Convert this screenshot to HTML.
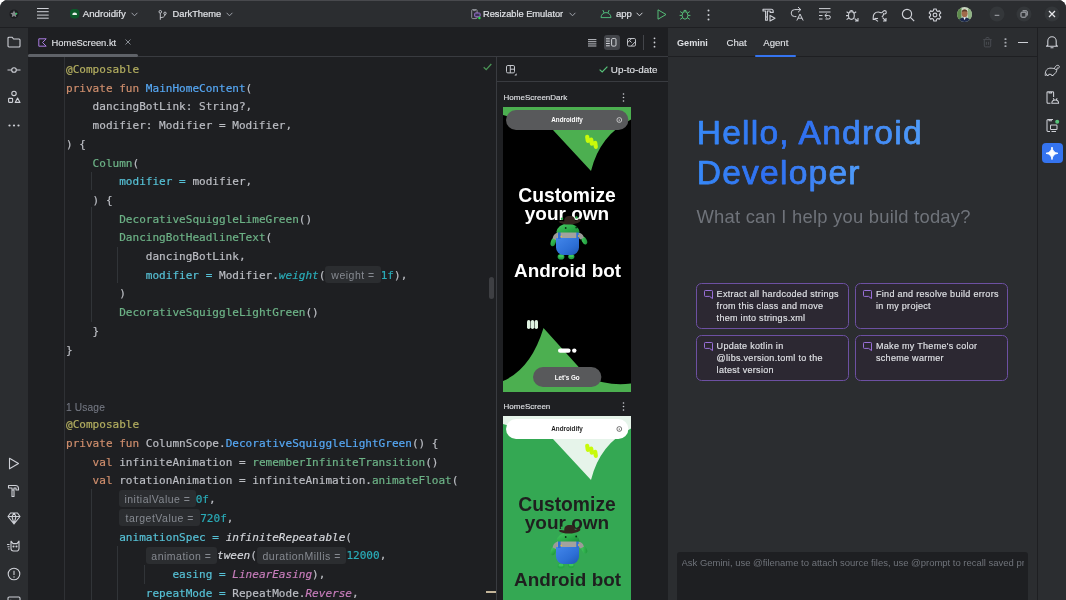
<!DOCTYPE html>
<html lang="en">
<head>
<meta charset="utf-8">
<title>Android Studio – HomeScreen.kt</title>
<style>
*{box-sizing:border-box;margin:0;padding:0}
html,body{width:1066px;height:600px;overflow:hidden;background:#fff}
body{font-family:"Liberation Sans","DejaVu Sans",sans-serif;color:#dfe1e5;font-size:10.5px;-webkit-font-smoothing:antialiased}
#win{will-change:transform;position:absolute;left:0;top:0;width:1066px;height:600px;background:#2b2d30;border-radius:8px 8px 0 0;overflow:hidden}
.abs{position:absolute}
svg{position:absolute;overflow:visible}
/* title bar */
#title{position:absolute;left:0;top:0;width:1066px;height:27px;background:#2b2d30;border-top:1px solid #48494d}
.ui{-webkit-text-stroke:.12px}
#title .t{-webkit-text-stroke:.2px;position:absolute;top:6.300px;line-height:14px;font-size:9.5px;color:#dfe1e5;white-space:nowrap}
/* stripes */
#lstripe{position:absolute;left:0;top:27px;width:28px;height:573px;background:#2b2d30;border-top:1px solid #1e1f22}
#rstripe{position:absolute;left:1037.400px;top:27px;width:28.600px;height:573px;background:#2b2d30;border-top:1px solid #1e1f22;border-left:1px solid #1e1f22}
/* editor */
#editor{position:absolute;left:28px;top:28px;width:640px;height:572px;background:#1e1f22}
#tabs{position:absolute;left:0;top:0;width:640px;height:29px;border-bottom:1px solid #393b40}
#code{position:absolute;left:0;top:29px;width:468px;height:543px;overflow:hidden}
.ln{position:absolute;left:38px;top:calc(4px + var(--i) * 18.7px);height:18.7px;line-height:18.7px;white-space:pre;font-family:"DejaVu Sans Mono","Liberation Mono",monospace;font-size:11.05px;color:#bcbec4;letter-spacing:0;-webkit-text-stroke:.18px}
.k{color:#cf8e6d}.fd{color:#56a8f5}.an{color:#b3ae60}.g{color:#6db387}.na{color:#56c1d6}.nu{color:#2aacb8}.it{font-style:italic}.ti{color:#2aacb8;font-style:italic}.pi{color:#c77dbb;font-style:italic}.wi{color:#d5d7dc;font-style:italic}
.h{display:inline-block;vertical-align:top;height:17px;margin-top:-.7px;line-height:18.300px;background:#2b2d30;color:#868a91;border-radius:3px;font-family:"Liberation Sans",sans-serif;font-size:10.500px;letter-spacing:.5px;text-align:center;font-style:normal;-webkit-text-stroke:0}
.guide{position:absolute;width:1px;background:#313438}
/* preview */
#preview{position:absolute;left:468px;top:29px;width:172px;height:543px;border-left:1px solid #393b40;overflow:hidden}
/* gemini */
#gem{position:absolute;left:668px;top:28px;width:370px;height:572px;background:#2b2d30}
#gemi{position:absolute;left:1px;top:0;width:369px;height:572px}

.hello{font-size:35.800px;line-height:41.500px;white-space:nowrap;color:#3b82f6;background:linear-gradient(90deg,#2f7df6 0%,#4a8cf7 60%,#5a96f8 100%);-webkit-background-clip:text;background-clip:text;-webkit-text-fill-color:transparent;width:230px}
.card{position:absolute;width:152.500px;height:45.500px;border:1.200px solid #6d50a2;border-radius:5.500px;background:#2c2832}
.card .ct{-webkit-text-stroke:.15px;position:absolute;left:19.600px;top:5px;font-size:9px;letter-spacing:.3px;line-height:11.800px;color:#dfe1e5;white-space:nowrap}
</style>
</head>
<body>
<div id="win">
<div id="title">
<!-- app icon -->
<svg style="left:8.700px;top:7.800px" width="10" height="10" viewBox="0 0 10 10"><circle cx="5" cy="5" r="4.600" fill="#1b1c1f"/><path d="M5.00 1.30 L6.12 3.66 L8.71 3.99 L6.81 5.79 L7.29 8.36 L5.00 7.10 L2.71 8.36 L3.19 5.79 L1.29 3.99 L3.88 3.66z" fill="#85878c"/><circle cx="7.300" cy="4.800" r=".95" fill="#2fbf5f"/></svg>
<!-- hamburger -->
<svg style="left:37px;top:6.300px" width="12" height="12" viewBox="0 0 12 12" stroke="#ced0d6" stroke-width="1"><path d="M0 1.500H11.700M0 4.700H11.700M0 8.100H11.700M0 11.200H11.700"/></svg>
<!-- project -->
<svg style="left:70.100px;top:7.900px" width="9.400" height="9.400" viewBox="0 0 9.400 9.400"><rect x="0" y="0" width="9.400" height="9.400" rx="3.600" fill="#0c5a2a"/><path d="M2.300 6a2.400 2.400 0 0 1 4.800 0z" fill="#e8efe9"/></svg>
<div class="t" style="left:82.7px;font-size:9.7px">Androidify</div>
<svg style="left:131px;top:11px" width="7" height="5" viewBox="0 0 7 5" fill="none" stroke="#9da0a8" stroke-width="1"><path d="M.6 .8 3.5 3.8 6.4 .8"/></svg>
<!-- branch -->
<svg style="left:158px;top:8.500px" width="9" height="10" viewBox="0 0 9 10" fill="none" stroke="#ced0d6" stroke-width=".9"><circle cx="2.300" cy="1.800" r="1.300"/><circle cx="7" cy="3.300" r="1.200"/><path d="M2.300 3.100V9.800M2.300 7.600C4.500 7.600 7 7 7 4.500"/></svg>
<div class="t" style="left:172.5px;font-size:9.3px">DarkTheme</div>
<svg style="left:225.5px;top:11px" width="7" height="5" viewBox="0 0 7 5" fill="none" stroke="#9da0a8" stroke-width="1"><path d="M.6 .8 3.5 3.8 6.4 .8"/></svg>
<!-- device selector -->
<svg style="left:470.800px;top:8.400px" width="10.500" height="10.500" viewBox="0 0 10.500 10.500" fill="none" stroke="#9a9da3" stroke-width=".9"><rect x=".7" y=".6" width="5.400" height="9" rx="1"/><path d="M2.400 .6V1.600H4.400V.6"/><rect x="3.700" y="4" width="5.400" height="3.800" rx=".8" stroke="#a77be0" fill="#3a3350"/><circle cx="8.400" cy="9" r="1.200" fill="#2be04a" stroke="none"/></svg>
<div class="t" style="left:483px;font-size:9.25px">Resizable Emulator</div>
<svg style="left:568.5px;top:11px" width="7" height="5" viewBox="0 0 7 5" fill="none" stroke="#9da0a8" stroke-width="1"><path d="M.6 .8 3.5 3.8 6.4 .8"/></svg>
<!-- run config -->
<svg style="left:600px;top:8px" width="12" height="11" viewBox="0 0 12 11" fill="none" stroke="#4fb87a" stroke-width="1"><path d="M1 8.6a5 5 0 0 1 10 0zM2.8 1 4.2 4M9.2 1 7.8 4"/></svg>
<div class="t" style="left:616px">app</div>
<svg style="left:635.5px;top:11px" width="7" height="5" viewBox="0 0 7 5" fill="none" stroke="#ced0d6" stroke-width="1"><path d="M.6 .8 3.5 3.8 6.4 .8"/></svg>
<svg style="left:656.5px;top:8px" width="10" height="11" viewBox="0 0 10 11" fill="none" stroke="#57c47a" stroke-width=".95" stroke-linejoin="round"><path d="M1 .8 9 5.5 1 10.2z"/></svg>
<svg style="left:679px;top:7px" width="12" height="13" viewBox="0 0 12 13" fill="none" stroke="#57c47a" stroke-width=".95"><ellipse cx="6" cy="7.4" rx="2.9" ry="3.8"/><path d="M4.2 3.6a1.9 1.9 0 0 1 3.6 0M0.6 7.4H3M9 7.4h2.4M1.2 3.6 3.4 5M10.8 3.6 8.6 5M1.2 11.4l2.2-1.6M10.8 11.4 8.6 9.8"/></svg>
<svg style="left:707px;top:8px" width="3" height="12" viewBox="0 0 3 12" fill="#ced0d6"><circle cx="1.5" cy="1.6" r="1"/><circle cx="1.5" cy="6" r="1"/><circle cx="1.5" cy="10.4" r="1"/></svg>
<!-- right toolbar icons -->
<svg style="left:762px;top:7px" width="14" height="14" viewBox="0 0 14 14" fill="none" stroke="#ced0d6" stroke-width="1.1" stroke-linejoin="round"><path d="M1 1.2H9.2a2 2 0 0 1 2 2V4.4H8.2V3H5.4V9H3.6V3H1zM3.6 9.6v2.6h1.8V9.6M8 7.4 13 10.2 8 13z"/></svg>
<svg style="left:790px;top:6px" width="14" height="14" viewBox="0 0 14 14" fill="none" stroke="#ced0d6" stroke-width="1" stroke-linejoin="round" stroke-linecap="round"><path d="M10.600 2.600H4.700A3.500 3.500 0 0 0 4.700 9.600H6M8.300 .3 10.800 2.600 8.300 5M7 13.200 10 7 13 13.200M8.200 11.200H11.800"/></svg>
<svg style="left:817px;top:6px" width="14" height="14" viewBox="0 0 14 14" fill="none" stroke="#ced0d6" stroke-width="1"><path d="M2 1.600H13.500M2 5H13.500M2 8.500H5.500M2 12H5.500M8 8.500H11.600a1.750 1.750 0 0 1 0 3.500H8.500M9.900 6.500 7.800 8.500 9.900 10.500"/></svg>
<svg style="left:845px;top:7px" width="14" height="14" viewBox="0 0 14 14" fill="none" stroke="#ced0d6" stroke-width="1.1"><ellipse cx="6.4" cy="7.6" rx="2.9" ry="3.8"/><path d="M4.6 3.8a1.9 1.9 0 0 1 3.6 0M1 7.6H3.4M1.6 3.8 3.8 5.2M11.2 3.8 9 5.2M1.6 11.6l2.2-1.6M9.6 10.6 13 13M13 10v3H10"/></svg>
<svg style="left:872px;top:7px" width="16" height="14" viewBox="0 0 16 14" fill="none" stroke="#ced0d6" stroke-width="1.1" stroke-linejoin="round"><path d="M1.2 9.4c0-3 1.6-5.4 5-5.4 1.6 0 2.2.8 3.4.8 1 0 1.4-2.2 3-2.2a1.7 1.7 0 0 1 0 3.4c-.7 0-1-.4-1-.4 0 1.800-.6 2.800-1.800 3.400M1.200 9.400v2h1.800v-1.200c1 .4 2 .4 3 0M10.600 9.600 14 13M14 10v3h-3M3.600 11.600 6 13.400"/></svg>
<svg style="left:901px;top:7px" width="14" height="14" viewBox="0 0 14 14" fill="none" stroke="#ced0d6" stroke-width="1.2"><circle cx="6" cy="6" r="4.6"/><path d="M9.400 9.400 13.200 13.200"/></svg>
<svg style="left:928px;top:7px" width="14" height="14" viewBox="0 0 14 14" fill="none" stroke="#ced0d6" stroke-width="1.1" stroke-linejoin="round"><circle cx="7" cy="7" r="1.900"/><path d="M5.800 1h2.400l.4 1.700 1.300.7 1.700-.5 1.200 2.100-1.300 1.200v1.600l1.300 1.200-1.200 2.100-1.700-.5-1.300.7-.4 1.700H5.800l-.4-1.700-1.300-.7-1.700.5-1.200-2.100 1.300-1.200V6.200L1.200 5l1.200-2.100 1.700.5 1.300-.7z"/></svg>
<!-- avatar -->
<svg style="left:956.600px;top:6.200px" width="15" height="15" viewBox="0 0 15 15"><defs><clipPath id="av"><circle cx="7.500" cy="7.500" r="7.400"/></clipPath></defs><g clip-path="url(#av)"><rect width="15" height="15" fill="#c9d6c2"/><rect x="0" y="0" width="4.500" height="15" fill="#5d8a4c"/><rect x="11" y="0" width="4" height="15" fill="#8fb383"/><ellipse cx="7.600" cy="6.300" rx="3" ry="3.900" fill="#a06a4a"/><path d="M4.700 4.800a3 3 0 0 1 5.800 0c-1.800-.9-4-.9-5.800 0z" fill="#5a3a2a"/><path d="M1.500 15c0-3 2.200-4.600 6-4.600s6 1.600 6 4.600z" fill="#1e2a4d"/><path d="M6.300 10.300 7.600 13.200 8.900 10.300z" fill="#f0f0f5"/></g></svg>
<!-- window buttons -->
<svg style="left:989px;top:5px" width="16" height="16" viewBox="0 0 16 16"><circle cx="8" cy="8" r="7.500" fill="#34373a"/><path d="M5.700 9.300h4.600" stroke="#a8abb1" stroke-width="1"/></svg>
<svg style="left:1016px;top:5px" width="16" height="16" viewBox="0 0 16 16"><circle cx="8" cy="8" r="7.500" fill="#34373a"/><rect x="5" y="6.200" width="5" height="5" rx=".8" fill="none" stroke="#b4b7bd" stroke-width="1"/><path d="M6.600 4.800H10.400a.8.800 0 0 1 .8.800V9.600" fill="none" stroke="#b4b7bd" stroke-width="1"/></svg>
<svg style="left:1044px;top:5px" width="16" height="16" viewBox="0 0 16 16"><circle cx="8" cy="8" r="7.500" fill="#34373a"/><path d="M5 5l6 6M11 5l-6 6" stroke="#e6e7ea" stroke-width="1.250"/></svg>
</div>
<div class="abs" style="left:0;top:27px;width:1066px;height:1px;background:#1e1f22"></div>
<div id="lstripe">
<svg style="left:7px;top:7px" width="14" height="14" viewBox="0 0 14 14" fill="none" stroke="#ced0d6" stroke-width="1.1" stroke-linejoin="round"><path d="M1 3.200a1 1 0 0 1 1-1h3l1.600 1.800H12a1 1 0 0 1 1 1V11a1 1 0 0 1-1 1H2a1 1 0 0 1-1-1z"/></svg>
<svg style="left:7px;top:36px" width="14" height="12" viewBox="0 0 14 12" fill="none" stroke="#ced0d6" stroke-width="1.1"><circle cx="7" cy="6" r="2.300"/><path d="M.5 6H4.700M9.300 6H13.500"/></svg>
<svg style="left:7px;top:62px" width="14" height="14" viewBox="0 0 14 14" fill="none" stroke="#ced0d6" stroke-width="1.1" stroke-linejoin="round"><circle cx="7" cy="3.400" r="2.200"/><rect x="1.600" y="8.400" width="4" height="4" rx=".6"/><path d="M10.600 8 13 12.400H8.200z"/></svg>
<svg style="left:8px;top:96px" width="12" height="3" viewBox="0 0 12 3" fill="#ced0d6"><circle cx="1.500" cy="1.500" r="1.100"/><circle cx="6" cy="1.500" r="1.100"/><circle cx="10.500" cy="1.500" r="1.100"/></svg>
<svg style="left:8px;top:429px" width="12" height="13" viewBox="0 0 12 13" fill="none" stroke="#ced0d6" stroke-width="1.1" stroke-linejoin="round"><path d="M1.500 1.200 10.500 6.500 1.500 11.800z"/></svg>
<svg style="left:7px;top:456px" width="14" height="14" viewBox="0 0 14 14" fill="none" stroke="#ced0d6" stroke-width="1.1" stroke-linejoin="round"><path d="M1.500 1.500H8.500a3 3 0 0 1 3 3V6H9V4H7V6H5V4H1.500zM5 6.500V12.500H7V6.500"/></svg>
<svg style="left:7px;top:484px" width="14" height="13" viewBox="0 0 14 13" fill="none" stroke="#ced0d6" stroke-width="1.1" stroke-linejoin="round"><path d="M3.500 1H10.500L13 4.500 7 12 1 4.500zM1 4.500H13M5 4.500 7 12 9 4.500M5 4.500 7 1 9 4.500"/></svg>
<svg style="left:6px;top:512px" width="15" height="13" viewBox="0 0 15 13" fill="none" stroke="#ced0d6" stroke-width="1.1" stroke-linejoin="round"><path d="M5 1.200 7 3.600H11L13 1.200V8.500a2.500 2.500 0 0 1-2.500 2.500h-3A2.500 2.500 0 0 1 5 8.500zM1 4.500H3.500M1.500 6.800H3.500M2 9H3.500"/><circle cx="7.500" cy="6.500" r=".5" fill="#ced0d6"/><circle cx="10.500" cy="6.500" r=".5" fill="#ced0d6"/></svg>
<svg style="left:7px;top:539px" width="14" height="14" viewBox="0 0 14 14" fill="none" stroke="#ced0d6" stroke-width="1.1"><circle cx="7" cy="7" r="5.800"/><path d="M7 3.800V8"/><circle cx="7" cy="10" r=".7" fill="#ced0d6" stroke="none"/></svg>
<svg style="left:7px;top:568px" width="14" height="12" viewBox="0 0 14 12" fill="none" stroke="#ced0d6" stroke-width="1.1" stroke-linejoin="round"><rect x="1" y="1" width="12" height="10" rx="1.200"/><path d="M3.500 4 6 6.200 3.500 8.400"/></svg>
</div>
<div id="editor">
  <div id="tabs">
<svg style="left:10px;top:10px" width="9" height="9" viewBox="0 0 9 9" fill="none" stroke="#a87be0" stroke-width="1" stroke-linejoin="round"><path d="M.8 .8H8.200L4.500 4.500 8.200 8.200H.8z"/></svg>
<div class="abs ui" style="left:23.600px;top:7.600px;line-height:14px;font-size:9.4px;color:#dfe1e5;white-space:nowrap">HomeScreen.kt</div>
<svg style="left:96.600px;top:11.400px" width="6" height="6" viewBox="0 0 6 6" stroke="#868a91" stroke-width="1"><path d="M.5 .5l5 5M5.500 .5l-5 5"/></svg>
<div class="abs" style="left:0;top:26px;width:109.500px;height:3px;background:#5f6268;border-radius:1.500px"></div>
<!-- view mode icons -->
<svg style="left:560px;top:10.600px" width="8.400" height="7.600" viewBox="0 0 8.400 7.600" stroke="#ced0d6" stroke-width=".9"><path d="M0 .6H8.400M0 2.700H8.400M0 4.900H8.400M0 7H8.400"/></svg>
<div class="abs" style="left:575.600px;top:7px;width:16.400px;height:14.700px;border-radius:3px;background:#43454a"></div>
<svg style="left:578.300px;top:10.200px" width="10.600" height="8.600" viewBox="0 0 10.600 8.600" fill="none" stroke="#dfe1e5" stroke-width=".9"><path d="M0 .8H3.800M0 3.100H3.800M0 5.500H3.800M0 7.800H3.800"/><rect x="5.600" y=".5" width="4.400" height="7.600" rx="1.200"/></svg>
<svg style="left:598.600px;top:10.200px" width="9" height="8.600" viewBox="0 0 9 8.600" fill="none" stroke="#ced0d6" stroke-width=".9" stroke-linejoin="round"><rect x=".5" y=".5" width="8" height="7.600" rx="1.200"/><path d="M.5 4.800 4.600 .5M4.200 8.100 8.500 3.600M2.600 2.600l2 2"/></svg>
<div class="abs" style="left:614.500px;top:7px;width:1px;height:15px;background:#43454a"></div>
<svg style="left:624.500px;top:9px" width="3" height="11" viewBox="0 0 3 11" fill="#ced0d6"><circle cx="1.500" cy="1.300" r=".9"/><circle cx="1.500" cy="5.500" r=".9"/><circle cx="1.500" cy="9.700" r=".9"/></svg>
</div>
  <div id="code">
<div class="guide" style="left:36px;top:0;height:543px;background:#2f3135"></div>
<div class="guide" style="left:63px;top:114.700px;height:18.700px"></div>
<div class="guide" style="left:63px;top:149.700px;height:115px"></div>
<div class="guide" style="left:89px;top:189.700px;height:36.600px"></div>
<div class="guide" style="left:63px;top:432.300px;height:111px"></div>
<div class="guide" style="left:89px;top:489px;height:54px"></div>
<div class="guide" style="left:115.500px;top:508.300px;height:18.700px"></div>
<svg style="left:454.500px;top:5.500px" width="9" height="8" viewBox="0 0 9 8" fill="none" stroke="#4a9455" stroke-width="1.300"><path d="M.7 4.200 3.200 6.600 8.300 1"/></svg>
<div class="abs" style="left:460.800px;top:219.700px;width:5.400px;height:22.500px;border-radius:2.700px;background:#3e3f43"></div>
<div class="abs" style="left:458px;top:534px;width:10px;height:2px;background:#c3b499"></div>
<div class="ln" style="--i:0"><span class="an">@Composable</span></div>
<div class="ln" style="--i:1"><span class="k">private fun</span> <span class="fd">MainHomeContent</span>(</div>
<div class="ln" style="--i:2">    dancingBotLink: String?,</div>
<div class="ln" style="--i:3">    modifier: Modifier = Modifier,</div>
<div class="ln" style="--i:4">) {</div>
<div class="ln" style="--i:5">    <span class="g">Column</span>(</div>
<div class="ln" style="--i:6">        <span class="na">modifier =</span> modifier,</div>
<div class="ln" style="--i:7">    ) {</div>
<div class="ln" style="--i:8">        <span class="g">DecorativeSquiggleLimeGreen</span>()</div>
<div class="ln" style="--i:9">        <span class="g">DancingBotHeadlineText</span>(</div>
<div class="ln" style="--i:10">            dancingBotLink,</div>
<div class="ln" style="--i:11">            <span class="na">modifier =</span> Modifier.<span class="ti">weight</span>(<span class="h" style="width:55.300px">weight =</span><span class="nu">1f</span>),</div>
<div class="ln" style="--i:12">        )</div>
<div class="ln" style="--i:13">        <span class="g">DecorativeSquiggleLightGreen</span>()</div>
<div class="ln" style="--i:14">    }</div>
<div class="ln" style="--i:15">}</div>
<div class="ln" style="--i:18;font-family:'Liberation Sans',sans-serif;font-size:10.200px;letter-spacing:.15px;color:#747883;-webkit-text-stroke:.1px;transform:translateY(.5px)">1 Usage</div>
<div class="ln" style="--i:19"><span class="an">@Composable</span></div>
<div class="ln" style="--i:20"><span class="k">private fun</span> ColumnScope.<span class="fd">DecorativeSquiggleLightGreen</span>() {</div>
<div class="ln" style="--i:21">    <span class="k">val</span> infiniteAnimation = <span class="g">rememberInfiniteTransition</span>()</div>
<div class="ln" style="--i:22">    <span class="k">val</span> rotationAnimation = infiniteAnimation.<span class="g">animateFloat</span>(</div>
<div class="ln" style="--i:23">        <span class="h" style="width:76.500px">initialValue =</span><span class="nu">0f</span>,</div>
<div class="ln" style="--i:24">        <span class="h" style="width:81px">targetValue =</span><span class="nu">720f</span>,</div>
<div class="ln" style="--i:25">        <span class="na">animationSpec =</span> <span class="wi">infiniteRepeatable</span>(</div>
<div class="ln" style="--i:26">            <span class="h" style="width:71.200px">animation =</span><span class="wi">tween</span>(<span class="h" style="width:89.500px">durationMillis =</span><span class="nu">12000</span>,</div>
<div class="ln" style="--i:27">                <span class="na">easing =</span> <span class="pi">LinearEasing</span>),</div>
<div class="ln" style="--i:28">            <span class="na">repeatMode =</span> RepeatMode.<span class="pi">Reverse</span>,</div>
</div>
  <div id="preview"><div class="abs" style="left:2px;top:0;width:170px;height:543px">
<div class="abs" style="left:-2px;top:0;width:172px;height:25px;border-bottom:1px solid #393b40"></div>
<svg style="left:7px;top:8px" width="12" height="11" viewBox="0 0 12 11" fill="none" stroke="#ced0d6" stroke-width=".95" stroke-linejoin="round"><rect x=".5" y=".5" width="8" height="7.400" rx="1.300"/><path d="M4.300 .5V7.900M4.300 4.200H8.500"/><path d="M10.600 8.300v2.200H8.400z" fill="#ced0d6" stroke="none"/></svg>
<svg style="left:100px;top:9px" width="9" height="7" viewBox="0 0 9 7" fill="none" stroke="#57c47a" stroke-width="1.200"><path d="M.6 3.600 3.200 6 8.400 .6"/></svg>
<div class="abs ui" style="left:111.800px;top:5.500px;line-height:14px;font-size:9.900px;color:#dfe1e5;white-space:nowrap">Up-to-date</div>
<div class="abs ui" style="left:4.600px;top:33.700px;line-height:14px;font-size:8px;color:#dfe1e5;white-space:nowrap">HomeScreenDark</div>
<svg style="left:122.500px;top:35.500px" width="3" height="9" viewBox="0 0 3 9" fill="#ced0d6"><circle cx="1.500" cy="1" r=".8"/><circle cx="1.500" cy="4.500" r=".8"/><circle cx="1.500" cy="8" r=".8"/></svg>

<svg style="left:4.300px;top:50px" width="128" height="285" viewBox="0 0 128 285" font-family="Liberation Sans, sans-serif">
<rect width="128" height="285" fill="#000"/>
<path d="M0 0H128V12.600Q97 28 88 64L50 23 0 8z" fill="#4caf50"/>
<path d="M84.200 29.800l.6 4M88.200 32.600l.6 4M92.200 35.800l.6 4" fill="none" stroke="#c8fa0a" stroke-width="4.200" stroke-linecap="round"/>
<rect x="3" y="3" width="122.400" height="20" rx="10" fill="#58595b"/>
<text x="64" y="15" font-size="6.300" font-weight="700" text-anchor="middle" fill="#fff">Androidify</text>
<circle cx="116.300" cy="13" r="2.400" fill="none" stroke="#fff" stroke-width=".6"/><path d="M116.300 12.400v1.800" stroke="#fff" stroke-width=".6"/>
<text x="64" y="95" font-size="19.300" font-weight="700" text-anchor="middle" fill="#fff">Customize</text>
<text x="64" y="113" font-size="19" font-weight="700" text-anchor="middle" fill="#fff">your own</text>
<text x="64.500" y="170" font-size="18.900" font-weight="700" text-anchor="middle" fill="#fff">Android bot</text>
<!-- bot -->
<g>
<defs>
<linearGradient id="hda" x1="0" y1="0" x2="1" y2="1"><stop offset="0" stop-color="#4bcb66"/><stop offset=".5" stop-color="#2fb14c"/><stop offset="1" stop-color="#1c8f39"/></linearGradient>
<linearGradient id="bla" x1="0" y1="0" x2="1" y2="1"><stop offset="0" stop-color="#4286ea"/><stop offset=".6" stop-color="#2d6fd6"/><stop offset="1" stop-color="#1f56b3"/></linearGradient>
</defs>
<ellipse cx="58" cy="149.800" rx="3.400" ry="2.800" fill="#27a846"/><ellipse cx="68.300" cy="149.600" rx="3.100" ry="2.600" fill="#27a846"/><ellipse cx="58" cy="149" rx="2.600" ry="1.600" fill="#3cc45c"/><ellipse cx="68.300" cy="148.800" rx="2.400" ry="1.500" fill="#3cc45c"/>
<ellipse cx="50.300" cy="135" rx="2.500" ry="4.400" transform="rotate(18 50.300 135)" fill="url(#hda)"/>
<ellipse cx="81.300" cy="133.500" rx="2.400" ry="4.200" transform="rotate(-28 81.300 133.500)" fill="url(#hda)"/>
<path d="M49.700 131.500c.5-3.500 3-6 6-6h19c3.500 0 5.500 2.200 6.200 5.200l-3.700 1.800-2-2.500H55l-1.600 3.300z" fill="#9c9b98"/>
<rect x="54" y="125" width="21.500" height="8" fill="#a3a29f"/>
<path d="M53 131H76V140.500a7.500 7.500 0 0 1-7.500 7.500H60.500A7.500 7.500 0 0 1 53 140.500z" fill="url(#bla)"/>
<rect x="55" y="125" width="2.600" height="7" fill="#2d6fd6"/><rect x="73.300" y="125" width="2.400" height="7" fill="#2d6fd6"/>
<circle cx="58.300" cy="129.500" r=".8" fill="#e8c23a"/><circle cx="75.600" cy="129" r=".8" fill="#e8c23a"/>
<path d="M53.200 125.500a11.800 10 0 0 1 23.500 0z" fill="url(#hda)"/>
<circle cx="62.700" cy="121" r=".9" fill="#0e2b16"/><circle cx="73.200" cy="120.500" r=".9" fill="#0e2b16"/>
<circle cx="59" cy="111.800" r="1.200" fill="#2fb14c"/><circle cx="73.500" cy="110.500" r="1.200" fill="#2fb14c"/>
<path transform="translate(.3 1.600)" d="M55.300 113.200c3.500 3.600 16 4 21.500-.3.800-1.500-.1-2.900-1.500-3-.5 1.400-1.800 2.100-3.800 2.300.3-2.800-.6-4.900-5.300-4.900-4.400 0-5.400 2.600-5.200 5.600-2-.3-4.300-1-5.700.3z" fill="#33241e"/>
</g>

<path d="M0 274Q28 262 40.500 221L75.700 260Q87 273.500 100 275.200Q114 278.600 128 276.500V285H0z" fill="#4caf50"/>
<rect x="24" y="213" width="3.400" height="9" rx="1.700" fill="#dff2e1"/><rect x="27.800" y="213" width="3.400" height="9" rx="1.700" fill="#dff2e1"/><rect x="31.600" y="213" width="3.400" height="9" rx="1.700" fill="#dff2e1"/>
<rect x="55" y="241.400" width="12.600" height="4.400" rx="2.200" fill="#fff"/><circle cx="71.300" cy="243.600" r="2.200" fill="#fff"/>
<rect x="30" y="260" width="68.400" height="20" rx="10" fill="#58595b"/>
<text x="64.200" y="273" font-size="6.300" font-weight="700" text-anchor="middle" fill="#fff">Let's Go</text>

</svg>

<div class="abs ui" style="left:4.600px;top:342.900px;line-height:14px;font-size:8px;color:#dfe1e5;white-space:nowrap">HomeScreen</div>
<svg style="left:122.500px;top:344.500px" width="3" height="9" viewBox="0 0 3 9" fill="#ced0d6"><circle cx="1.500" cy="1" r=".8"/><circle cx="1.500" cy="4.500" r=".8"/><circle cx="1.500" cy="8" r=".8"/></svg>

<svg style="left:4.300px;top:359px" width="128" height="285" viewBox="0 0 128 285" font-family="Liberation Sans, sans-serif">
<rect width="128" height="285" fill="#34a853"/>
<path d="M0 0H128V12.600Q97 28 88 64L50 23 0 8z" fill="#e6f4ea"/>
<path d="M84.200 29.800l.6 4M88.200 32.600l.6 4M92.200 35.800l.6 4" fill="none" stroke="#c8fa0a" stroke-width="4.200" stroke-linecap="round"/>
<rect x="3" y="3" width="122.400" height="20" rx="10" fill="#fff"/>
<text x="64" y="15" font-size="6.300" font-weight="700" text-anchor="middle" fill="#1f1f1f">Androidify</text>
<circle cx="116.300" cy="13" r="2.400" fill="none" stroke="#1f1f1f" stroke-width=".6"/><path d="M116.300 12.400v1.800" stroke="#1f1f1f" stroke-width=".6"/>
<text x="64" y="95" font-size="19.300" font-weight="700" text-anchor="middle" fill="#1f1f1f">Customize</text>
<text x="64" y="113" font-size="19" font-weight="700" text-anchor="middle" fill="#1f1f1f">your own</text>
<text x="64.500" y="170" font-size="18.900" font-weight="700" text-anchor="middle" fill="#1f1f1f">Android bot</text>
<!-- bot -->
<g>
<defs>
<linearGradient id="hdb" x1="0" y1="0" x2="1" y2="1"><stop offset="0" stop-color="#4bcb66"/><stop offset=".5" stop-color="#2fb14c"/><stop offset="1" stop-color="#1c8f39"/></linearGradient>
<linearGradient id="blb" x1="0" y1="0" x2="1" y2="1"><stop offset="0" stop-color="#4286ea"/><stop offset=".6" stop-color="#2d6fd6"/><stop offset="1" stop-color="#1f56b3"/></linearGradient>
</defs>
<ellipse cx="58" cy="149.800" rx="3.400" ry="2.800" fill="#27a846"/><ellipse cx="68.300" cy="149.600" rx="3.100" ry="2.600" fill="#27a846"/><ellipse cx="58" cy="149" rx="2.600" ry="1.600" fill="#3cc45c"/><ellipse cx="68.300" cy="148.800" rx="2.400" ry="1.500" fill="#3cc45c"/>
<ellipse cx="50.300" cy="135" rx="2.500" ry="4.400" transform="rotate(18 50.300 135)" fill="url(#hdb)"/>
<ellipse cx="81.300" cy="133.500" rx="2.400" ry="4.200" transform="rotate(-28 81.300 133.500)" fill="url(#hdb)"/>
<path d="M49.700 131.500c.5-3.500 3-6 6-6h19c3.500 0 5.500 2.200 6.200 5.200l-3.700 1.800-2-2.500H55l-1.600 3.300z" fill="#9c9b98"/>
<rect x="54" y="125" width="21.500" height="8" fill="#a3a29f"/>
<path d="M53 131H76V140.500a7.500 7.500 0 0 1-7.500 7.500H60.500A7.500 7.500 0 0 1 53 140.500z" fill="url(#blb)"/>
<rect x="55" y="125" width="2.600" height="7" fill="#2d6fd6"/><rect x="73.300" y="125" width="2.400" height="7" fill="#2d6fd6"/>
<circle cx="58.300" cy="129.500" r=".8" fill="#e8c23a"/><circle cx="75.600" cy="129" r=".8" fill="#e8c23a"/>
<path d="M53.200 125.500a11.800 10 0 0 1 23.500 0z" fill="url(#hdb)"/>
<circle cx="62.700" cy="121" r=".9" fill="#0e2b16"/><circle cx="73.200" cy="120.500" r=".9" fill="#0e2b16"/>
<circle cx="59" cy="111.800" r="1.200" fill="#2fb14c"/><circle cx="73.500" cy="110.500" r="1.200" fill="#2fb14c"/>
<path transform="translate(.3 1.600)" d="M55.300 113.200c3.500 3.600 16 4 21.500-.3.800-1.500-.1-2.900-1.500-3-.5 1.400-1.800 2.100-3.800 2.300.3-2.800-.6-4.900-5.300-4.900-4.400 0-5.400 2.600-5.200 5.600-2-.3-4.300-1-5.700.3z" fill="#33241e"/>
</g>

</svg>
</div></div>
</div>
<div id="gem"><div id="gemi">
<div class="abs" style="left:-1px;top:0;width:370px;height:29px;border-bottom:1px solid #1e1f22"></div>
<div class="abs" style="left:8px;top:7.700px;line-height:14px;font-size:9.100px;font-weight:700;color:#dfe1e5">Gemini</div>
<div class="abs ui" style="left:57.500px;top:7.700px;line-height:14px;font-size:9.600px;color:#dfe1e5">Chat</div>
<div class="abs ui" style="left:94.300px;top:7.700px;line-height:14px;font-size:9.600px;color:#dfe1e5">Agent</div>
<div class="abs" style="left:86px;top:26.500px;width:41px;height:2.500px;background:#3574f0;border-radius:1px"></div>
<svg style="left:313.600px;top:9.200px" width="9" height="10.400" viewBox="0 0 9 10.400" fill="none" stroke="#484b50" stroke-width="1" stroke-linejoin="round"><path d="M1.300 2.800V9a.9.900 0 0 0 .9.900H6.800a.9.900 0 0 0 .9-.9V2.800M.3 2.600H8.700M3 2.600V1.200a.7.700 0 0 1 .7-.7H5.300a.7.700 0 0 1 .7.700V2.600M3.400 4.800v3M5.600 4.800v3"/></svg>
<svg style="left:335px;top:9.600px" width="3" height="10" viewBox="0 0 3 10" fill="#a4a7ad"><rect x=".5" y=".2" width="2" height="1.900" rx=".5"/><rect x=".5" y="3.700" width="2" height="1.900" rx=".5"/><rect x=".5" y="7.200" width="2" height="1.900" rx=".5"/></svg>
<div class="abs" style="left:349.300px;top:13.500px;width:9.500px;height:1.200px;background:#ced0d6"></div>
<svg style="left:20px;top:80px" width="260" height="100" viewBox="0 0 260 100" font-family="Liberation Sans, sans-serif" font-size="33.600" letter-spacing="1.220" stroke-width=".75" stroke-linejoin="round">
<defs><linearGradient id="hg" x1="0" y1="0" x2="1" y2="0"><stop offset="0" stop-color="#3789f8"/><stop offset=".45" stop-color="#2e6ef1"/><stop offset="1" stop-color="#4f9cf9"/></linearGradient></defs>
<text x="7.700" y="36" fill="url(#hg)" stroke="url(#hg)">Hello, Android</text>
<text x="7.700" y="76.300" fill="url(#hg)" stroke="url(#hg)">Developer</text>
</svg>
<div class="abs" style="left:27.500px;top:177px;line-height:24px;font-size:18.400px;letter-spacing:.23px;color:#6f737a;white-space:nowrap">What can I help you build today?</div>
<div class="card" style="left:27px;top:255px"><svg style="left:7.100px;top:6.100px" width="9" height="9" viewBox="0 0 9 9" fill="none" stroke="#9a70d9" stroke-width="1" stroke-linejoin="round"><path d="M8.500 8.600V1.300a.8.800 0 0 0-.8-.8H1.300a.8.800 0 0 0-.8.800V5.600a.8.800 0 0 0 .8.800H5.600z"/></svg><div class="ct">Extract all hardcoded strings<br>from this class and move<br>them into strings.xml</div></div><div class="card" style="left:186.400px;top:255px"><svg style="left:7.100px;top:6.100px" width="9" height="9" viewBox="0 0 9 9" fill="none" stroke="#9a70d9" stroke-width="1" stroke-linejoin="round"><path d="M8.500 8.600V1.300a.8.800 0 0 0-.8-.8H1.300a.8.800 0 0 0-.8.800V5.600a.8.800 0 0 0 .8.800H5.600z"/></svg><div class="ct">Find and resolve build errors<br>in my project</div></div><div class="card" style="left:27px;top:307.300px"><svg style="left:7.100px;top:6.100px" width="9" height="9" viewBox="0 0 9 9" fill="none" stroke="#9a70d9" stroke-width="1" stroke-linejoin="round"><path d="M8.500 8.600V1.300a.8.800 0 0 0-.8-.8H1.300a.8.800 0 0 0-.8.800V5.600a.8.800 0 0 0 .8.800H5.600z"/></svg><div class="ct">Update kotlin in<br>@libs.version.toml to the<br>latest version</div></div><div class="card" style="left:186.400px;top:307.300px"><svg style="left:7.100px;top:6.100px" width="9" height="9" viewBox="0 0 9 9" fill="none" stroke="#9a70d9" stroke-width="1" stroke-linejoin="round"><path d="M8.500 8.600V1.300a.8.800 0 0 0-.8-.8H1.300a.8.800 0 0 0-.8.800V5.600a.8.800 0 0 0 .8.800H5.600z"/></svg><div class="ct">Make my Theme's color<br>scheme warmer</div></div>
<div class="abs" style="left:8px;top:524.300px;width:351px;height:60px;background:#1e1f22;border-radius:3px"></div>
<div class="abs" style="left:12.500px;top:527.500px;width:342.500px;overflow:hidden;line-height:14px;font-size:9.480px;color:#6f737a;white-space:nowrap">Ask Gemini, use @filename to attach source files, use @prompt to recall saved prompts</div>
</div></div>
<div id="rstripe"><div class="abs" style="left:.6px;top:0;width:27px;height:572px">
<svg style="left:6px;top:7px" width="14" height="14" viewBox="0 0 14 14" fill="none" stroke="#ced0d6" stroke-width="1.1" stroke-linejoin="round"><path d="M2.800 10.200V6a4.200 4.200 0 0 1 8.400 0v4.200l1.300 1H1.500zM5.500 12.800h3"/></svg>
<svg style="left:5px;top:35.500px" width="16" height="13" viewBox="0 0 16 13" fill="none" stroke="#ced0d6" stroke-width="1" stroke-linejoin="round" stroke-linecap="round"><path d="M1.300 11.500c-.5-3.500 1-7 4.500-7.300 2-.2 3 .3 4.500.3.800-1.500 1.800-3.200 3.400-3.200 1.300 0 1.800 1 1.600 1.900-.2.900-1.200 1.300-1.900.8M13 5c-.3 2.800-1.500 4.800-3.500 5.500l-.3 1h-1.700l-.3-1.200c-.8.100-1.500.1-2.300-.1l-.5 1.300H2.800l-.3-1.500M10.300 4.500c.3 1 1.300 1.500 2.700 .5"/></svg>
<svg style="left:6px;top:63px" width="15" height="14" viewBox="0 0 15 14" fill="none" stroke="#ced0d6" stroke-width="1.050" stroke-linejoin="round"><path d="M5.500 12.300H3a1 1 0 0 1-1-1V1.700a1 1 0 0 1 1-1h4.600a1 1 0 0 1 1 1V6M4 .7v1.200h2.600V.7"/><path d="M6.800 12.300a3.400 3.400 0 0 1 6.800 0zM8.200 7.300l.9 1.500M12.200 7.300l-.9 1.500"/></svg>
<svg style="left:6px;top:91px" width="15" height="14" viewBox="0 0 15 14" fill="none" stroke="#ced0d6" stroke-width="1.050" stroke-linejoin="round"><path d="M5 12.500H3a1 1 0 0 1-1-1v-10a1 1 0 0 1 1-1h5M4 .5v1.300h3"/><rect x="5.500" y="6" width="6.500" height="4.500" rx=".8"/><path d="M6.500 12.500h4.500"/><circle cx="12.200" cy="2.800" r="2" fill="#57c47a" stroke="none"/></svg>
<div class="abs" style="left:3.100px;top:114.800px;width:20.500px;height:20.500px;border-radius:4px;background:#3574f0"></div>
<svg style="left:7.300px;top:118.900px" width="12" height="12.600" viewBox="0 0 12 12.600"><path d="M6 0C6.500 3.800 8.200 5.700 12 6.300 8.200 6.900 6.500 8.800 6 12.600 5.500 8.800 3.800 6.900 0 6.300 3.800 5.700 5.500 3.800 6 0z" fill="#fff" stroke="#fff" stroke-width=".9" stroke-linejoin="round"/></svg>
</div></div>
</div>
</body>
</html>
